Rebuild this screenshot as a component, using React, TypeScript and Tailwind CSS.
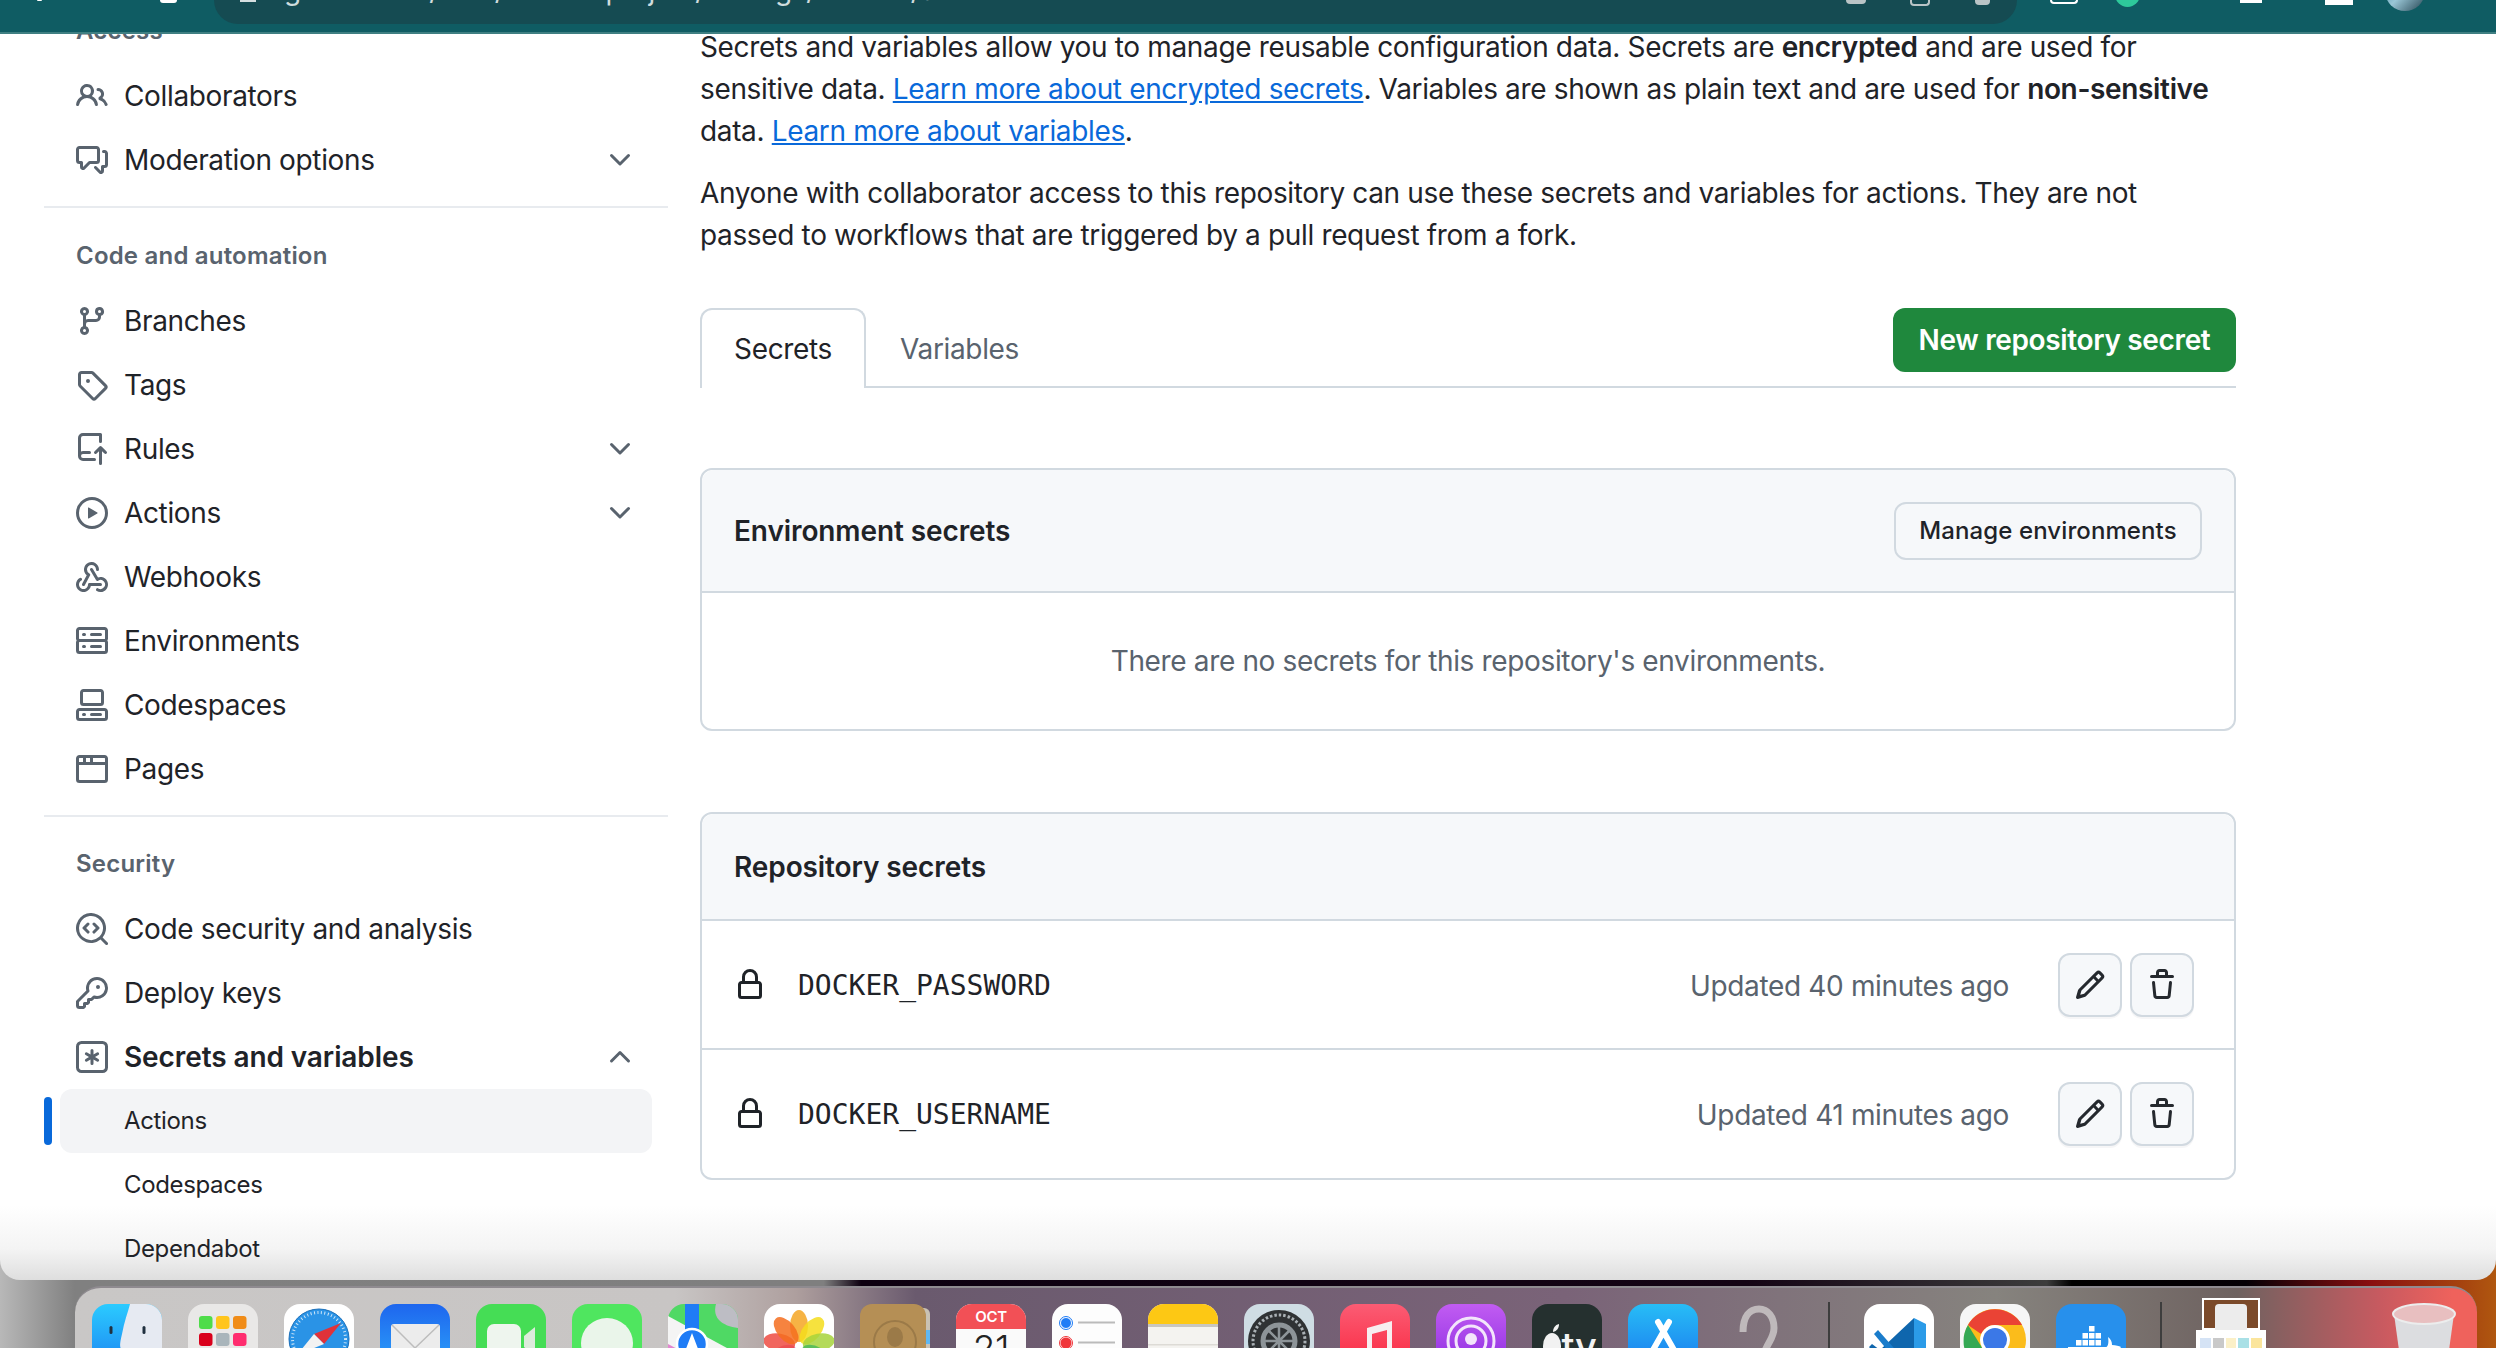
import type { ReactNode } from "react";

type NavItem = { label: string; icon: string; chevron?: boolean };

// octicons, 16px set
const paths: Record<string, string> = {
  people:
    "M2 5.5a3.5 3.5 0 1 1 5.898 2.549 5.508 5.508 0 0 1 3.034 4.084.75.75 0 1 1-1.482.235 4 4 0 0 0-7.9 0 .75.75 0 0 1-1.482-.236A5.507 5.507 0 0 1 3.102 8.05 3.493 3.493 0 0 1 2 5.5ZM11 4a3.001 3.001 0 0 1 2.22 5.018 5.01 5.01 0 0 1 2.56 3.012.749.749 0 0 1-.885.954.752.752 0 0 1-.549-.514 3.507 3.507 0 0 0-2.522-2.372.75.75 0 0 1-.574-.73v-.352a.75.75 0 0 1 .416-.672A1.5 1.5 0 0 0 11 5.5.75.75 0 0 1 11 4Zm-5.5-.5a2 2 0 1 0-.001 3.999A2 2 0 0 0 5.5 3.5Z",
  discussion:
    "M1.75 1h8.5c.966 0 1.75.784 1.75 1.75v5.5A1.75 1.75 0 0 1 10.25 10H7.061l-2.574 2.573A1.458 1.458 0 0 1 2 11.543V10h-.25A1.75 1.75 0 0 1 0 8.25v-5.5C0 1.784.784 1 1.75 1ZM1.5 2.75v5.5c0 .138.112.25.25.25h1a.75.75 0 0 1 .75.75v2.19l2.72-2.72a.749.749 0 0 1 .53-.22h3.5a.25.25 0 0 0 .25-.25v-5.5a.25.25 0 0 0-.25-.25h-8.5a.25.25 0 0 0-.25.25Zm13 2a.25.25 0 0 0-.25-.25h-.5a.75.75 0 0 1 0-1.5h.5c.966 0 1.75.784 1.75 1.75v5.5A1.75 1.75 0 0 1 14.25 12H14v1.543a1.458 1.458 0 0 1-2.487 1.03L9.22 12.28a.749.749 0 0 1 .326-1.275.749.749 0 0 1 .734.215l2.22 2.22v-2.19a.75.75 0 0 1 .75-.75h1a.25.25 0 0 0 .25-.25Z",
  branch:
    "M9.5 3.25a2.25 2.25 0 1 1 3 2.122V6A2.5 2.5 0 0 1 10 8.5H6a1 1 0 0 0-1 1v1.128a2.251 2.251 0 1 1-1.5 0V5.372a2.25 2.25 0 1 1 1.5 0v1.836A2.493 2.493 0 0 1 6 7h4a1 1 0 0 0 1-1v-.628A2.25 2.25 0 0 1 9.5 3.25Zm-6 0a.75.75 0 1 0 1.5 0 .75.75 0 0 0-1.5 0Zm8.25-.75a.75.75 0 1 0 0 1.5.75.75 0 0 0 0-1.5ZM4.25 12a.75.75 0 1 0 0 1.5.75.75 0 0 0 0-1.5Z",
  tag: "M1 7.775V2.75C1 1.784 1.784 1 2.75 1h5.025c.464 0 .91.184 1.238.513l6.25 6.25a1.75 1.75 0 0 1 0 2.474l-5.026 5.026a1.75 1.75 0 0 1-2.474 0l-6.25-6.25A1.752 1.752 0 0 1 1 7.775Zm1.5 0c0 .066.026.13.073.177l6.25 6.25a.25.25 0 0 0 .354 0l5.025-5.025a.25.25 0 0 0 0-.354l-6.25-6.25a.25.25 0 0 0-.177-.073H2.75a.25.25 0 0 0-.25.25ZM6 5a1 1 0 1 1 0 2 1 1 0 0 1 0-2Z",
  push: "M1 2.5A2.5 2.5 0 0 1 3.5 0h8.75a.75.75 0 0 1 .75.75v3.5a.75.75 0 0 1-1.5 0V1.5h-8a1 1 0 0 0-1 1v6.708A2.493 2.493 0 0 1 3.5 9h3.25a.75.75 0 0 1 0 1.5H3.5a1 1 0 0 0 0 2h5.75a.75.75 0 0 1 0 1.5H3.5A2.5 2.5 0 0 1 1 11.5Zm13.23 7.79h-.001l-1.224-1.224v6.184a.75.75 0 0 1-1.5 0V9.066L10.28 10.29a.75.75 0 0 1-1.06-1.061l2.505-2.504a.75.75 0 0 1 1.06 0L15.29 9.23a.751.751 0 0 1-.018 1.042.751.751 0 0 1-1.042.018Z",
  play: "M8 0a8 8 0 1 1 0 16A8 8 0 0 1 8 0ZM1.5 8a6.5 6.5 0 1 0 13 0 6.5 6.5 0 0 0-13 0Zm4.879-2.773 4.264 2.559a.25.25 0 0 1 0 .428l-4.264 2.559A.25.25 0 0 1 6 10.559V5.442a.25.25 0 0 1 .379-.215Z",
  webhook:
    "M5.5 4.25a2.25 2.25 0 0 1 4.5 0 .75.75 0 0 0 1.5 0 3.75 3.75 0 1 0-6.14 2.889l-2.272 4.258a.75.75 0 0 0 1.324.706L7 7.25a.75.75 0 0 0-.309-1.015A2.25 2.25 0 0 1 5.5 4.25ZM7.364 3.607a.75.75 0 0 1 1.03.257l2.608 4.349a3.75 3.75 0 1 1-.628 6.785.75.75 0 0 1 .752-1.299 2.25 2.25 0 1 0-.033-3.88.75.75 0 0 1-1.03-.256L7.107 4.636a.75.75 0 0 1 .257-1.03ZM2.9 8.776A.75.75 0 0 1 2.625 9.8 2.25 2.25 0 1 0 6 11.75a.75.75 0 0 1 .75-.751h5.5a.75.75 0 0 1 0 1.5H7.425a3.751 3.751 0 1 1-5.55-3.998.75.75 0 0 1 1.024.274Z",
  server:
    "M1.75 1h12.5c.966 0 1.75.784 1.75 1.75v4c0 .372-.116.717-.314 1 .198.283.314.628.314 1v4a1.75 1.75 0 0 1-1.75 1.75H1.75A1.75 1.75 0 0 1 0 12.75v-4c0-.372.116-.717.314-1a1.739 1.739 0 0 1-.314-1v-4C0 1.784.784 1 1.75 1ZM1.5 2.75v4c0 .138.112.25.25.25h12.5a.25.25 0 0 0 .25-.25v-4a.25.25 0 0 0-.25-.25H1.75a.25.25 0 0 0-.25.25ZM1.75 8.5a.25.25 0 0 0-.25.25v4c0 .138.112.25.25.25h12.5a.25.25 0 0 0 .25-.25v-4a.25.25 0 0 0-.25-.25ZM7 4.75A.75.75 0 0 1 7.75 4h4.5a.75.75 0 0 1 0 1.5h-4.5A.75.75 0 0 1 7 4.75ZM7.75 10h4.5a.75.75 0 0 1 0 1.5h-4.5a.75.75 0 0 1 0-1.5ZM3 4.75A.75.75 0 0 1 3.75 4h.5a.75.75 0 0 1 0 1.5h-.5A.75.75 0 0 1 3 4.75ZM3.75 10h.5a.75.75 0 0 1 0 1.5h-.5a.75.75 0 0 1 0-1.5Z",
  codespaces:
    "M0 11.25c0-.966.784-1.75 1.75-1.75h12.5c.966 0 1.75.784 1.75 1.75v3A1.75 1.75 0 0 1 14.25 16H1.75A1.75 1.75 0 0 1 0 14.25Zm2-9.5C2 .784 2.784 0 3.75 0h8.5C13.216 0 14 .784 14 1.75v5a1.75 1.75 0 0 1-1.75 1.75h-8.5A1.75 1.75 0 0 1 2 6.75Zm1.75-.25a.25.25 0 0 0-.25.25v5c0 .138.112.25.25.25h8.5a.25.25 0 0 0 .25-.25v-5a.25.25 0 0 0-.25-.25Zm-2 9.5a.25.25 0 0 0-.25.25v3c0 .138.112.25.25.25h12.5a.25.25 0 0 0 .25-.25v-3a.25.25 0 0 0-.25-.25ZM7 12.75a.75.75 0 0 1 .75-.75h4.5a.75.75 0 0 1 0 1.5h-4.5a.75.75 0 0 1-.75-.75Zm-4 0a.75.75 0 0 1 .75-.75h.5a.75.75 0 0 1 0 1.5h-.5a.75.75 0 0 1-.75-.75Z",
  browser:
    "M0 2.75C0 1.784.784 1 1.75 1h12.5c.966 0 1.75.784 1.75 1.75v10.5A1.75 1.75 0 0 1 14.25 15H1.75A1.75 1.75 0 0 1 0 13.25ZM14.5 6h-13v7.25c0 .138.112.25.25.25h12.5a.25.25 0 0 0 .25-.25Zm-6-3.5v2h6V2.75a.25.25 0 0 0-.25-.25ZM5 2.5v2h2v-2Zm-3.25 0a.25.25 0 0 0-.25.25V4.5h2v-2Z",
  codescan:
    "M8.47 4.97a.75.75 0 0 0 0 1.06L9.94 7.5 8.47 8.97a.75.75 0 1 0 1.06 1.06l2-2a.75.75 0 0 0 0-1.06l-2-2a.75.75 0 0 0-1.06 0ZM6.53 6.03a.75.75 0 0 0-1.06-1.06l-2 2a.75.75 0 0 0 0 1.06l2 2a.75.75 0 1 0 1.06-1.06L5.06 7.5l1.47-1.47ZM12.246 13.307a7.501 7.501 0 1 1 1.06-1.06l2.474 2.473a.749.749 0 0 1-.326 1.275.749.749 0 0 1-.734-.215ZM1.5 7.5a6.002 6.002 0 0 0 3.608 5.504 6.002 6.002 0 0 0 6.486-1.117.748.748 0 0 1 .292-.293A6 6 0 1 0 1.5 7.5Z",
  key: "M10.5 0a5.499 5.499 0 1 1-1.288 10.848l-.932.932a.749.749 0 0 1-.53.22H7v.75a.749.749 0 0 1-.22.53l-.5.5a.749.749 0 0 1-.53.22H5v.75a.749.749 0 0 1-.22.53l-.5.5a.749.749 0 0 1-.53.22h-2A1.75 1.75 0 0 1 0 14.25v-2c0-.199.079-.389.22-.53l4.932-4.932A5.5 5.5 0 0 1 10.5 0Zm-4 5.5c-.001.431.069.86.205 1.269a.75.75 0 0 1-.181.768L1.5 12.56v1.69c0 .138.112.25.25.25h1.69l.06-.06v-1.19a.75.75 0 0 1 .75-.75h1.19l.06-.06v-1.19a.75.75 0 0 1 .75-.75h1.19l1.023-1.025a.75.75 0 0 1 .768-.18A4 4 0 1 0 6.5 5.5ZM11 6a1 1 0 1 1 0-2 1 1 0 0 1 0 2Z",
  asterisk:
    "M0 2.75A2.75 2.75 0 0 1 2.75 0h10.5A2.75 2.75 0 0 1 16 2.75v10.5A2.75 2.75 0 0 1 13.25 16H2.75A2.75 2.75 0 0 1 0 13.25ZM2.75 1.5c-.69 0-1.25.56-1.25 1.25v10.5c0 .69.56 1.25 1.25 1.25h10.5c.69 0 1.25-.56 1.25-1.25V2.75c0-.69-.56-1.25-1.25-1.25ZM8 4a.75.75 0 0 1 .75.75V6.7l1.69-.975a.75.75 0 0 1 .75 1.3L9.5 8l1.69.975a.75.75 0 0 1-.75 1.3L8.75 9.3v1.95a.75.75 0 0 1-1.5 0V9.3l-1.69.975a.75.75 0 0 1-.75-1.3L6.5 8l-1.69-.975a.75.75 0 0 1 .75-1.3l1.69.975V4.75A.75.75 0 0 1 8 4Z",
  lock: "M4 4a4 4 0 0 1 8 0v2h.25c.966 0 1.75.784 1.75 1.75v5.5A1.75 1.75 0 0 1 12.25 15h-8.5A1.75 1.75 0 0 1 2 13.25v-5.5C2 6.784 2.784 6 3.75 6H4Zm8.25 3.5h-8.5a.25.25 0 0 0-.25.25v5.5c0 .138.112.25.25.25h8.5a.25.25 0 0 0 .25-.25v-5.5a.25.25 0 0 0-.25-.25ZM10.5 6V4a2.5 2.5 0 1 0-5 0v2Z",
  pencil:
    "M11.013 1.427a1.75 1.75 0 0 1 2.474 0l1.086 1.086a1.75 1.75 0 0 1 0 2.474l-8.61 8.61c-.21.21-.47.364-.756.445l-3.251.93a.75.75 0 0 1-.927-.928l.929-3.25c.081-.286.235-.547.445-.758l8.61-8.61Zm.176 4.823L9.75 4.81l-6 6a.249.249 0 0 0-.064.108l-.558 1.953 1.953-.558a.253.253 0 0 0 .108-.064Zm1.238-3.763a.25.25 0 0 0-.354 0L10.811 3.75l1.439 1.44 1.263-1.263a.25.25 0 0 0 0-.354Z",
  trash:
    "M11 1.75V3h2.25a.75.75 0 0 1 0 1.5H2.75a.75.75 0 0 1 0-1.5H5V1.75C5 .784 5.784 0 6.75 0h2.5C10.216 0 11 .784 11 1.75ZM4.496 6.675l.66 6.6a.25.25 0 0 0 .249.225h5.19a.25.25 0 0 0 .249-.225l.66-6.6a.75.75 0 0 1 1.492.149l-.66 6.6A1.748 1.748 0 0 1 10.595 15h-5.19a1.75 1.75 0 0 1-1.741-1.575l-.66-6.6a.75.75 0 1 1 1.492-.15ZM6.5 1.75V3h3V1.75a.25.25 0 0 0-.25-.25h-2.5a.25.25 0 0 0-.25.25Z",
  down: "M12.78 5.22a.749.749 0 0 1 0 1.06l-4.25 4.25a.749.749 0 0 1-1.06 0L3.22 6.28a.749.749 0 1 1 1.06-1.06L8 8.939l3.72-3.719a.749.749 0 0 1 1.06 0Z",
  up: "M3.22 10.53a.749.749 0 0 1 0-1.06l4.25-4.25a.749.749 0 0 1 1.06 0l4.25 4.25a.749.749 0 1 1-1.06 1.06L8 6.811 4.28 10.53a.749.749 0 0 1-1.06 0Z",
};

function Octicon({ name, className = "text-[#59636e]" }: { name: string; className?: string }) {
  return (
    <svg viewBox="0 0 16 16" fill="currentColor" className={`h-8 w-8 shrink-0 ${className}`}>
      <path d={paths[name]} />
    </svg>
  );
}

const accessItems: NavItem[] = [
  { label: "Collaborators", icon: "people" },
  { label: "Moderation options", icon: "discussion", chevron: true },
];

const codeItems: NavItem[] = [
  { label: "Branches", icon: "branch" },
  { label: "Tags", icon: "tag" },
  { label: "Rules", icon: "push", chevron: true },
  { label: "Actions", icon: "play", chevron: true },
  { label: "Webhooks", icon: "webhook" },
  { label: "Environments", icon: "server" },
  { label: "Codespaces", icon: "codespaces" },
  { label: "Pages", icon: "browser" },
];

function NavRow({ item }: { item: NavItem }) {
  return (
    <div className="flex h-16 items-center gap-4 pl-4 pr-4 text-[#1f2328]">
      <Octicon name={item.icon} />
      <span className="flex-1">{item.label}</span>
      {item.chevron && <Octicon name="down" />}
    </div>
  );
}

function SectionHeading({ children }: { children: ReactNode }) {
  return (
    <div className="mb-[17px] pl-4 text-[24px] leading-8 font-semibold tracking-[0.2px] text-[#59636e]">
      {children}
    </div>
  );
}

function SubRow({ label, active }: { label: string; active?: boolean }) {
  return (
    <div className="relative flex h-16 items-center">
      {active && <span className="absolute top-2 -left-4 h-12 w-2 rounded-md bg-[#0969da]" />}
      <div className={`flex h-16 w-full items-center rounded-xl pl-16 text-[24px] text-[#1f2328] ${active ? "bg-[#f3f4f6]" : ""}`}>
        {label}
      </div>
    </div>
  );
}

function Sidebar() {
  return (
    <aside className="-mt-[19px] w-[700px] shrink-0 pl-11 pr-8">
      <div className="mr-4 ml-4">
        <SectionHeading>Access</SectionHeading>
        {accessItems.map((item) => (
          <NavRow key={item.label} item={item} />
        ))}
      </div>
      <div className="mt-[14px] h-0.5 bg-[#e8ebef]" />
      <div className="mt-8 ml-4 mr-4">
        <SectionHeading>Code and automation</SectionHeading>
        {codeItems.map((item) => (
          <NavRow key={item.label} item={item} />
        ))}
      </div>
      <div className="mt-[14px] h-0.5 bg-[#e8ebef]" />
      <div className="mt-[31px] ml-4 mr-4">
        <SectionHeading>Security</SectionHeading>
        <NavRow item={{ label: "Code security and analysis", icon: "codescan" }} />
        <NavRow item={{ label: "Deploy keys", icon: "key" }} />
        <div className="flex h-16 items-center gap-4 pl-4 pr-4 font-semibold tracking-[-0.1px] text-[#1f2328]">
          <Octicon name="asterisk" />
          <span className="flex-1">Secrets and variables</span>
          <Octicon name="up" />
        </div>
        <SubRow label="Actions" active />
        <SubRow label="Codespaces" />
        <SubRow label="Dependabot" />
      </div>
    </aside>
  );
}

function SecretRow({ name, updated, last }: { name: string; updated: string; last?: boolean }) {
  return (
    <div className={`flex items-center pr-10 pl-8 ${last ? "h-[128px]" : "h-[129px] border-b-2 border-[#d1d9e0]"}`}>
      <Octicon name="lock" className="text-[#1f2328]" />
      <span className="ml-8 pt-0.5 font-['DejaVu_Sans_Mono',monospace] text-[28px] tracking-normal text-[#1f2328]">{name}</span>
      <span className="mr-[49px] ml-auto pt-0.5 text-[#59636e]">{updated}</span>
      <div className="flex gap-2">
        <button className="flex h-16 w-16 items-center justify-center rounded-xl border-2 border-[#d1d9e0] bg-[#f6f8fa] shadow-[0_2px_0_rgba(31,35,40,0.04)]">
          <Octicon name="pencil" className="text-[#25292e]" />
        </button>
        <button className="flex h-16 w-16 items-center justify-center rounded-xl border-2 border-[#d1d9e0] bg-[#f6f8fa] shadow-[0_2px_0_rgba(31,35,40,0.04)]">
          <Octicon name="trash" className="text-[#25292e]" />
        </button>
      </div>
    </div>
  );
}

function Main() {
  return (
    <main className="-mt-[8px] w-[1536px] text-[#1f2328]">
      <p className="mb-5 leading-[42px]">
        Secrets and variables allow you to manage reusable configuration data. Secrets are <b className="font-semibold">encrypted</b> and are used for
        <br />
        sensitive data. <a className="text-[#0969da] underline">Learn more about encrypted secrets</a>. Variables are shown as plain text and are used for{" "}
        <b className="font-semibold">non-sensitive</b>
        <br />
        data. <a className="text-[#0969da] underline">Learn more about variables</a>.
      </p>
      <p className="leading-[42px]">
        Anyone with collaborator access to this repository can use these secrets and variables for actions. They are not
        <br />
        passed to workflows that are triggered by a pull request from a fork.
      </p>

      <div className="mt-[52px] flex h-20 items-start border-b-2 border-[#d1d9e0]">
        <div className="flex h-20 w-[166px] items-center justify-center rounded-t-xl border-x-2 border-t-2 border-[#d1d9e0] bg-white">Secrets</div>
        <div className="flex h-20 items-center pt-0.5 pl-[34px] text-[#59636e]">Variables</div>
        <button className="ml-auto flex h-16 w-[343px] items-center justify-center rounded-xl bg-[#1f883d] font-semibold text-white">
          New repository secret
        </button>
      </div>

      <section className="mt-20 rounded-xl border-2 border-[#d1d9e0]">
        <div className="flex h-[123px] items-center justify-between rounded-t-xl border-b-2 border-[#d1d9e0] bg-[#f6f8fa] pr-8 pl-8">
          <h3 className="font-semibold tracking-[-0.1px]">Environment secrets</h3>
          <button className="flex h-[58px] w-[308px] items-center justify-center rounded-xl border-2 border-[#d1d9e0] bg-[#f6f8fa] text-[24px] font-medium tracking-[0.1px]">
            Manage environments
          </button>
        </div>
        <div className="flex h-[136px] items-center justify-center text-[#59636e]">There are no secrets for this repository's environments.</div>
      </section>

      <section className="mt-[81px] rounded-xl border-2 border-[#d1d9e0]">
        <div className="flex h-[107px] items-center rounded-t-xl border-b-2 border-[#d1d9e0] bg-[#f6f8fa] pl-8 font-semibold tracking-[-0.1px]">
          Repository secrets
        </div>
        <SecretRow name="DOCKER_PASSWORD" updated="Updated 40 minutes ago" />
        <SecretRow name="DOCKER_USERNAME" updated="Updated 41 minutes ago" last />
      </section>
    </main>
  );
}

function TopBar() {
  return (
    <header className="flex h-[34px] shrink-0 items-start overflow-hidden border-b-2 border-[#3f7f82] bg-[#0f5c63]">
      <div className="flex w-[214px] shrink-0 pl-[37px]">
        <span className="block h-px w-[5px] rounded-b bg-white" />
        <span className="ml-[118px] block h-[3px] w-[17px] rounded-b-full bg-white" />
      </div>
      <div className="flex h-6 flex-1 items-start overflow-hidden rounded-b-[30px] bg-[#154b52] pl-[26px]">
        <span className="block h-0.5 w-4 bg-[#d5dfe0]" />
        <span className="-mt-[26px] ml-[28px] text-[28px] leading-8 text-[#cfdcdd]">github.com/user/docker-project/settings/secrets/actions</span>
        <span className="ml-auto block h-1 w-5 rounded-b bg-[#b9c4c6]" />
        <span className="ml-11 block h-1.5 w-5 rounded-b border-x-2 border-b-2 border-[#b9c4c6]" />
        <span className="mr-[27px] ml-[45px] block h-[5px] w-[15px] rounded-b bg-[#b9c4c6]" />
      </div>
      <div className="flex w-[479px] shrink-0 items-start pl-[33px]">
        <span className="block h-1 w-7 rounded-b border-x-2 border-b-2 border-white" />
        <span className="ml-[37px] -mt-[18px] block h-[25px] w-[25px] rounded-full bg-[#2ec99b]" />
        <span className="ml-[100px] block h-[3px] w-[22px] bg-white" />
        <span className="ml-[63px] block h-[5px] w-7 bg-white" />
        <span className="ml-8 -mt-[29px] block h-10 w-10 rounded-full bg-[linear-gradient(135deg,#2b7f9a,#9ac6d6_50%,#23424f)]" />
      </div>
    </header>
  );
}

const Tile = ({ children }: { children: ReactNode }) => (
  <svg viewBox="0 0 70 70" className="h-[70px] w-[70px] shrink-0">
    {children}
  </svg>
);

function DockIcons() {
  return (
    <>
      {/* finder */}
      <Tile>
        <defs>
          <linearGradient id="fb" x1="0" y1="0" x2="0" y2="1">
            <stop offset="0" stopColor="#2bcbff" />
            <stop offset="1" stopColor="#1b7df0" />
          </linearGradient>
        </defs>
        <rect width="70" height="70" rx="16" fill="url(#fb)" />
        <path d="M38 0H54A16 16 0 0 1 70 16V54A16 16 0 0 1 54 70H30V46C28 44 27 42 30 30C32 18 36 8 38 0Z" fill="#e6eaf2" />
        <rect x="17.5" y="22" width="3" height="8" rx="1.5" fill="#20303f" />
        <rect x="50.5" y="22" width="3" height="8" rx="1.5" fill="#20303f" />
      </Tile>
      {/* launchpad */}
      <Tile>
        <rect width="70" height="70" rx="16" fill="#e9e8e7" />
        <rect x="11" y="12" width="13.5" height="13" rx="3" fill="#4fdc4a" />
        <rect x="28" y="12" width="13.5" height="13" rx="3" fill="#ffc51c" />
        <rect x="45" y="12" width="13.5" height="13" rx="3" fill="#f08c18" />
        <rect x="11" y="29" width="13.5" height="13" rx="3" fill="#d9001b" />
        <rect x="28" y="29" width="13.5" height="13" rx="3" fill="#a9b5bb" />
        <rect x="45" y="29" width="13.5" height="13" rx="3" fill="#ff2d6f" />
      </Tile>
      {/* safari */}
      <Tile>
        <rect width="70" height="70" rx="16" fill="#ffffff" />
        <circle cx="35" cy="35" r="30" fill="#2a93e6" stroke="#1c6fb8" strokeWidth="1" />
        <circle cx="35" cy="35" r="26.5" fill="none" stroke="#cfe6f8" strokeWidth="3" strokeDasharray="1 2.5" />
        <path d="M57 19L40 40 30 30Z" fill="#e0323a" />
        <path d="M13 51L40 40 30 30Z" fill="#f2f2f2" />
      </Tile>
      {/* mail */}
      <Tile>
        <defs>
          <linearGradient id="mb" x1="0" y1="0" x2="0" y2="1">
            <stop offset="0" stopColor="#1e66ee" />
            <stop offset="1" stopColor="#2ea8fb" />
          </linearGradient>
        </defs>
        <rect width="70" height="70" rx="16" fill="url(#mb)" />
        <rect x="11" y="20" width="49" height="40" rx="3" fill="#ececec" />
        <path d="M12 21L35 44 59 21" fill="none" stroke="#bdbdbd" strokeWidth="1.5" />
      </Tile>
      {/* facetime */}
      <Tile>
        <rect width="70" height="70" rx="16" fill="#45dd55" />
        <rect x="11" y="20" width="34" height="34" rx="7" fill="#eef5ee" />
        <path d="M48 32L59 23V52L48 43Z" fill="#dcebdc" />
      </Tile>
      {/* messages */}
      <Tile>
        <rect width="70" height="70" rx="16" fill="#4fe65f" />
        <ellipse cx="35" cy="39" rx="26" ry="25" fill="#eaf5ea" />
      </Tile>
      {/* maps */}
      <Tile>
        <rect width="70" height="70" rx="16" fill="#4fd964" />
        <path d="M0 12L70 50V70H0Z" fill="#f4f4f4" />
        <path d="M0 40L30 56V70H16A16 16 0 0 1 0 54Z" fill="#e287d0" />
        <path d="M48 0C44 14 54 22 70 24V16A16 16 0 0 0 54 0Z" fill="#bdbdc4" />
        <path d="M17 0H31V70H17Z" fill="#1f7cf6" />
        <circle cx="24" cy="40" r="15" fill="#1f7cf6" stroke="#ffffff" strokeWidth="2.5" />
        <path d="M24 29L32 50 24 46 16 50Z" fill="#ffffff" />
      </Tile>
      {/* photos */}
      <Tile>
        <rect width="70" height="70" rx="16" fill="#ffffff" />
        <g transform="translate(35 42)">
          {["#f4a623", "#f5dd1c", "#a7d43c", "#4cb85c", "#3f8ae0", "#8c5fc8", "#d35ea8", "#ef4b42", "#f56d1f"].map((c, i) => (
            <ellipse key={c} cx="0" cy="-20" rx="9" ry="16" fill={c} opacity="0.85" transform={`rotate(${i * 40})`} />
          ))}
        </g>
      </Tile>
      {/* contacts */}
      <Tile>
        <rect x="6" y="4" width="64" height="66" rx="6" fill="#c9c2b4" />
        <rect x="66" y="26" width="4" height="14" fill="#5fb8f2" />
        <rect width="66" height="70" rx="12" fill="#b58f55" />
        <circle cx="35" cy="38" r="21" fill="none" stroke="#9b7a48" strokeWidth="2" />
        <ellipse cx="35" cy="33" rx="8" ry="10" fill="#9b7a48" />
      </Tile>
      {/* calendar */}
      <Tile>
        <rect width="70" height="70" rx="16" fill="#fafafa" />
        <path d="M0 25V16A16 16 0 0 1 16 0H54A16 16 0 0 1 70 16V25Z" fill="#f25056" />
        <text x="35" y="18" textAnchor="middle" fontFamily="Inter, sans-serif" fontWeight="600" fontSize="15" fill="#fff">
          OCT
        </text>
        <text x="35" y="58" textAnchor="middle" fontFamily="Inter, sans-serif" fontWeight="300" fontSize="37" fill="#222">
          21
        </text>
      </Tile>
      {/* reminders */}
      <Tile>
        <rect width="70" height="70" rx="16" fill="#fdfdfd" />
        <circle cx="14" cy="19" r="5.5" fill="#1f7cf6" stroke="#ffffff" strokeWidth="1" />
        <circle cx="14" cy="19" r="6.5" fill="none" stroke="#1f7cf6" strokeWidth="1" />
        <rect x="26" y="17.5" width="37" height="2" fill="#bbbbbb" />
        <circle cx="14" cy="39" r="5.5" fill="#f0353a" />
        <circle cx="14" cy="39" r="6.5" fill="none" stroke="#f0353a" strokeWidth="1" />
        <rect x="26" y="37.5" width="37" height="2" fill="#bbbbbb" />
      </Tile>
      {/* notes */}
      <Tile>
        <rect width="70" height="70" rx="16" fill="#f4f3f0" />
        <path d="M0 20V16A16 16 0 0 1 16 0H54A16 16 0 0 1 70 16V20Z" fill="#fdc814" />
        <rect y="20" width="70" height="3" fill="#c8c6c0" />
        <rect y="40" width="70" height="1.5" fill="#dddbd6" />
      </Tile>
      {/* system preferences */}
      <Tile>
        <rect width="70" height="70" rx="16" fill="#cfdde4" />
        <circle cx="35" cy="37" r="31" fill="#2f3234" />
        <circle cx="35" cy="37" r="26" fill="none" stroke="#a9b0b4" strokeWidth="3" strokeDasharray="2.5 2" />
        <circle cx="35" cy="37" r="16" fill="none" stroke="#8d9498" strokeWidth="5" />
        <path d="M19 37H51M35 21V53M24 26L46 48M46 26L24 48" stroke="#8d9498" strokeWidth="2.5" />
      </Tile>
      {/* music */}
      <Tile>
        <defs>
          <linearGradient id="mu" x1="0" y1="0" x2="0" y2="1">
            <stop offset="0" stopColor="#fb5c74" />
            <stop offset="1" stopColor="#fa233b" />
          </linearGradient>
        </defs>
        <rect width="70" height="70" rx="16" fill="url(#mu)" />
        <path d="M27 24L52 17V48H47V26L32 30V58H27Z" fill="#f7eef0" />
      </Tile>
      {/* podcasts */}
      <Tile>
        <defs>
          <linearGradient id="po" x1="0" y1="0" x2="0" y2="1">
            <stop offset="0" stopColor="#c15cf2" />
            <stop offset="1" stopColor="#8a2be0" />
          </linearGradient>
        </defs>
        <rect width="70" height="70" rx="16" fill="url(#po)" />
        <circle cx="35" cy="37" r="23" fill="none" stroke="#f3e5fb" strokeWidth="3" />
        <circle cx="35" cy="37" r="15" fill="none" stroke="#f3e5fb" strokeWidth="3" />
        <circle cx="35" cy="35" r="6" fill="#f3e5fb" />
      </Tile>
      {/* apple tv */}
      <Tile>
        <rect width="70" height="70" rx="16" fill="#25302f" />
        <ellipse cx="20" cy="42" rx="9" ry="13" fill="#f2f2f2" />
        <path d="M21 28C21 24 23 21 27 20C27 24 25 27 21 28Z" fill="#f2f2f2" />
        <text x="47" y="56" textAnchor="middle" fontFamily="Inter, sans-serif" fontWeight="500" fontSize="38" fill="#f2f2f2">
          tv
        </text>
      </Tile>
      {/* app store */}
      <Tile>
        <defs>
          <linearGradient id="as" x1="0" y1="0" x2="0" y2="1">
            <stop offset="0" stopColor="#27bdf6" />
            <stop offset="1" stopColor="#1a74ee" />
          </linearGradient>
        </defs>
        <rect width="70" height="70" rx="16" fill="url(#as)" />
        <path d="M30 18L54 60M41 18L17 60M11 50H59" stroke="#ffffff" strokeWidth="6" strokeLinecap="round" fill="none" />
      </Tile>
      {/* unknown app placeholder */}
      <Tile>
        <path d="M19 28C19 12 26 5 35 5C44 5 50 13 50 24C50 38 38 40 36 70" fill="none" stroke="#bfb9bb" strokeWidth="7" />
      </Tile>
    </>
  );
}

function DevIcons() {
  return (
    <>
      {/* vs code */}
      <Tile>
        <rect width="70" height="70" rx="16" fill="#ffffff" />
        <path d="M50 14L62 20V70H50Z" fill="#2b9be8" />
        <path d="M50 14L16 46 8 40 5 43 28 70H50Z" fill="#0f66ad" />
        <path d="M10 30L14 26 44 60 40 66Z" fill="#1a7ccb" />
      </Tile>
      {/* chrome */}
      <Tile>
        <rect width="70" height="70" rx="16" fill="#f6f6f6" />
        <circle cx="35" cy="36" r="31" fill="#fbbc1b" />
        <path d="M8 21A31 31 0 0 1 62 21H35A15 15 0 0 0 21 30Z" fill="#ea4335" />
        <path d="M8 21L21 42 35 68A31 31 0 0 1 8 21Z" fill="#34a853" />
        <circle cx="35" cy="36" r="15" fill="#ffffff" />
        <circle cx="35" cy="36" r="12" fill="#3b78e7" />
      </Tile>
      {/* docker */}
      <Tile>
        <rect width="70" height="70" rx="16" fill="#2790ec" />
        <g fill="#ffffff">
          <rect x="33" y="22" width="5.5" height="5.5" />
          <rect x="26.5" y="29" width="5.5" height="5.5" />
          <rect x="33" y="29" width="5.5" height="5.5" />
          <rect x="39.5" y="29" width="5.5" height="5.5" />
          <rect x="20" y="36" width="5.5" height="5.5" />
          <rect x="26.5" y="36" width="5.5" height="5.5" />
          <rect x="33" y="36" width="5.5" height="5.5" />
          <rect x="39.5" y="36" width="5.5" height="5.5" />
          <path d="M12 43H50C52 43 53 38 52 33C55 35 56 38 56 41C60 41 63 42 65 43C62 48 58 48 55 48C50 60 40 66 28 66C18 66 12 58 12 43Z" />
        </g>
      </Tile>
    </>
  );
}

function Dock() {
  return (
    <div className="mr-[19px] ml-[75px] flex h-[62px] items-start gap-[26px] overflow-hidden rounded-t-[26px] border-t-2 border-[#8f8b90] bg-[linear-gradient(90deg,#c9c7c6_0%,#c8c5c4_25%,#ae9f9e_30%,#6a5a6e_35%,#7a6378_62%,#86837e_80%,#6e6260_90%,#c85a60_96%,#ef625c_99%)] pt-4 pr-[18px] pl-[17px]">
      <DockIcons />
      <span className="mx-2 -mt-0.5 h-20 w-0.5 shrink-0 bg-[#3d3d3d]" />
      <DevIcons />
      <span className="mx-2 -mt-0.5 h-20 w-0.5 shrink-0 bg-[#3d3d3d]" />
      {/* downloads stack */}
      <div className="-mt-1.5 flex w-[70px] shrink-0 flex-col items-center">
        <div className="flex h-8 w-[58px] justify-center border-2 border-white bg-[#7b4a2a] pt-1">
          <div className="h-8 w-8 rounded-t-sm bg-[#ececec]" />
        </div>
        <div className="flex h-5 w-[70px] gap-0.5 bg-white px-1 pt-2">
          <span className="h-3 flex-1 bg-[#d5e3f5]" />
          <span className="h-3 flex-1 bg-[#c9c9c9]" />
          <span className="h-3 flex-1 bg-[#fbf0c8]" />
          <span className="h-3 flex-1 bg-[#a9e0e6]" />
          <span className="h-3 flex-1 bg-[#fbe59c]" />
        </div>
      </div>
      {/* trash */}
      <svg viewBox="0 0 70 70" className="-mt-0.5 ml-auto h-[70px] w-[70px] shrink-0">
        <path d="M5 12L13 70H57L65 12Z" fill="#dcdde0" />
        <ellipse cx="35" cy="12" rx="31" ry="10" fill="#e8bfc0" stroke="#eceded" strokeWidth="2" />
      </svg>
    </div>
  );
}

export default function App() {
  return (
    <div className="relative flex h-[1348px] w-[2496px] flex-col overflow-hidden bg-[linear-gradient(90deg,#b8b8b8_0%,#808080_3%,#7f7f7f_33%,#0d0010_34.5%,#140414_70%,#3c3c3c_82%,#000000_83%,#050005_90%,#8a0f10_95%,#b0570f_100%)] font-['Inter',sans-serif] text-[28px] tracking-[-0.35px]">
      <TopBar />
      <div className="flex h-[1246px] shrink-0 overflow-hidden rounded-b-[20px] bg-[linear-gradient(180deg,#ffffff_0%,#ffffff_94%,#f4f4f4_97.5%,#dedede_100%)]">
        <Sidebar />
        <Main />
      </div>
      <div className="h-1.5 shrink-0" />
      <Dock />
    </div>
  );
}
